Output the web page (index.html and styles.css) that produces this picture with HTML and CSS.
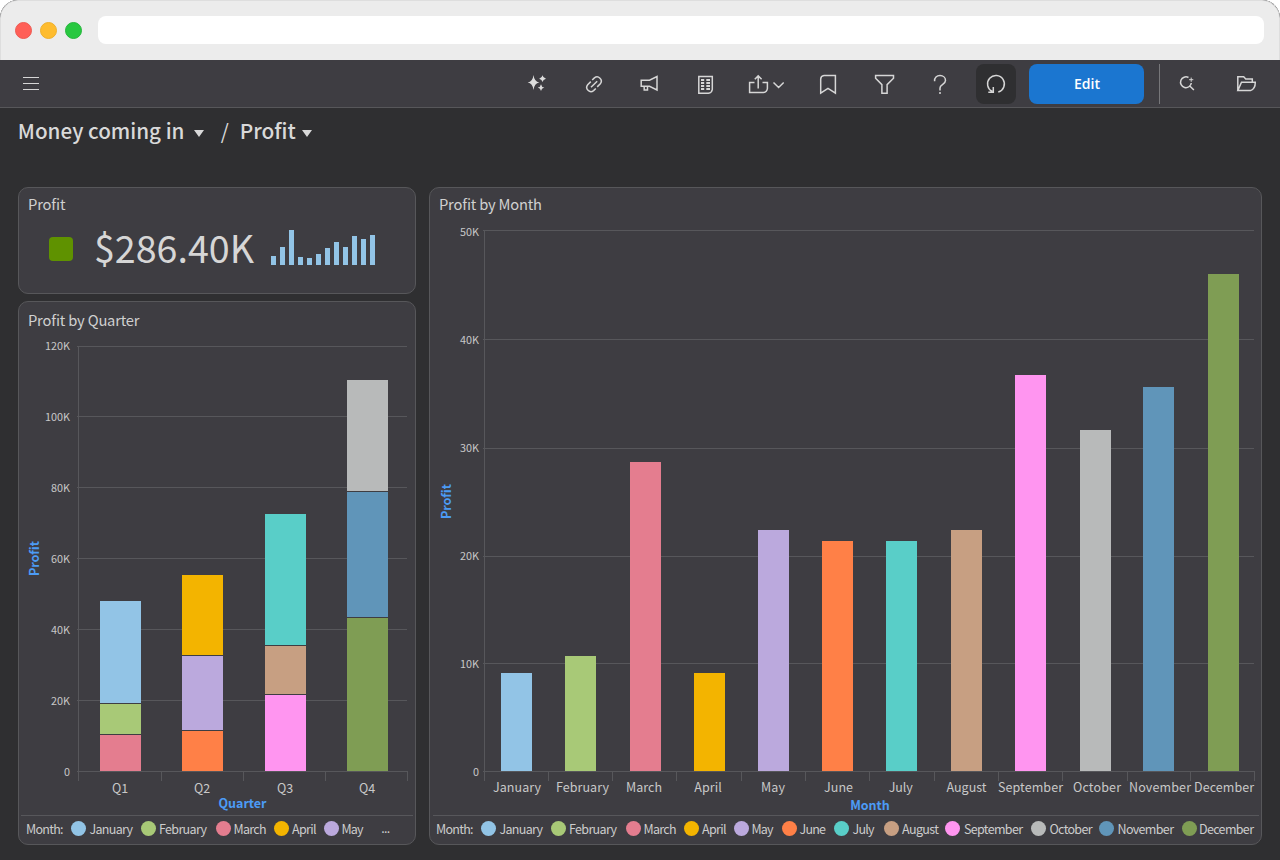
FILE: index.html
```html
<!DOCTYPE html>
<html lang="en">
<head>
<meta charset="utf-8">
<title>Profit dashboard</title>
<link rel="stylesheet" href="styles.css">
</head>
<body>
<div class="window">
  <header class="chrome">
    <span class="dot dot-red"></span>
    <span class="dot dot-yellow"></span>
    <span class="dot dot-green"></span>
    <div class="address"></div>
  </header>

  <nav class="toolbar">
    <svg class="icon" viewBox="11 64 40 40"><path class="thin" d="M23 77.5H39M23 83.5H39M23 89.5H39"/></svg>
    <div class="tools">
      <svg class="icon" viewBox="517 64 40 40"><g class="solid"><path d="M533.500 75Q534.300 81.700 539.300 82.500Q534.300 83.300 533.500 90Q532.700 83.300 527.700 82.500Q532.700 81.700 533.500 75Z"/><path d="M542.500 75.300Q543 78 546 78.700Q543 79.400 542.500 82Q542 79.400 539.200 78.700Q542 78 542.500 75.300Z"/><path d="M541 84.200Q541.500 87 544.300 87.600Q541.500 88.200 541 91Q540.500 88.200 537.800 87.600Q540.500 87 541 84.200Z"/></g></svg>
      <svg class="icon" viewBox="573 64 40 40"><path d="M592.200 80L594.400 77.900A4.200 4.200 0 0 1 600.300 83.800L597.200 86.900M595.800 88.500L593.600 90.600A4.200 4.200 0 0 1 587.700 84.700L590.800 81.600M591 87.200L597.200 81.200"/></svg>
      <svg class="icon" viewBox="629 64 40 40"><path d="M641.200 80.200H649.500L657 76.500V90L649.500 86.300H641.200ZM644.200 86.300V90H647.500V86.300"/></svg>
      <svg class="icon" viewBox="685 64 40 40"><path d="M698.800 76.600H712.300V89.500Q711.800 92.800 708.500 93.200H698.800Z"/><path class="heavy" d="M701 80H704.200M706.300 80H710M701 83H704.200M706.300 83H710M701 86H704.200M706.300 86H710M701 89H704.200M706.300 89H710"/></svg>
      <svg class="icon icon-wide" viewBox="741 64 51 40"><path d="M754.500 82.500H749.600V92.500H763.500Q767 92 767.400 88.500V82.500H762.500M758.200 88.500V76M754.800 79.300L758.200 75.900L761.600 79.300M773.500 82.500L778.600 87.500L783.700 82.500"/></svg>
      <svg class="icon" viewBox="808 64 40 40"><path d="M820.700 93.200V79Q820.900 75.900 824 75.600H835.400V93.200L828 88.400Z"/></svg>
      <svg class="icon" viewBox="864 64 40 40"><path d="M875.600 75.600H893.500V78.300L887.100 84.600V93.300H881.900V84.600L875.600 78.300Z"/></svg>
      <svg class="icon" viewBox="920 64 40 40"><path d="M934.600 81.200C934.300 77.500 936.800 75.600 940 75.600S945.500 77.600 945.500 80.500C945.500 84.300 940 84.300 940 88V90.500M940 92V94"/></svg>
      <div class="refresh"><svg class="icon" viewBox="976 64 40 40"><path d="M998.300 92A8.400 8.400 0 1 0 992.300 91.500M993.300 87V92.200H988.300"/></svg></div>
    </div>
    <button class="edit">Edit</button>
    <div class="divider"></div>
    <svg class="icon search" viewBox="1167 64 40 40"><path d="M1188.500 77.500A5.400 5.400 0 1 0 1191.300 83M1189.500 85.700L1193.900 90"/><path class="thin" d="M1191.200 77.600V81.800M1189.100 79.700H1193.300"/></svg>
    <svg class="icon folder" viewBox="1226 64 40 40"><path d="M1237.800 90.600V76.800H1243.700L1245.700 78.900H1252.300V82.300M1237.800 90.600L1241.500 82.300H1255.300Q1255.300 89.200 1250.500 90.600Z"/></svg>
  </nav>

  <div class="crumbs">
    <svg class="crumb-art" viewBox="0 108 430 79">
      <g class="crumb">
        <text x="17.800" y="139" textLength="166.700" lengthAdjust="spacingAndGlyphs">Money coming in</text>
        <text class="slash" x="220.800" y="139">/</text>
        <text x="239.700" y="139" textLength="56" lengthAdjust="spacingAndGlyphs">Profit</text>
      </g>
      <path class="caret" d="M194 130H204L199 137ZM302 130H312L307 137Z"/>
    </svg>
  </div>

  <main class="board">
    <div class="column">
      <section class="card card-kpi">
        <svg class="art" viewBox="19 188 396 105">
          <text class="title" x="28" y="210" textLength="37.500">Profit</text>
          <rect class="status" x="49" y="237" width="24" height="24" rx="4"/>
          <text class="figure" x="94" y="263" textLength="160" lengthAdjust="spacingAndGlyphs">$286.40K</text>
          <path class="jan" d="M271 265V256h5V265ZM280 265V247h5V265ZM289 265V230h5V265ZM298 265V257h5V265ZM307 265V258h5V265ZM316 265V254h5V265ZM325 265V248h5V265ZM334 265V242h5V265ZM343 265V247h5V265ZM352 265V236h5V265ZM361 265V239h5V265ZM370 265V235h5V265Z"/>
        </svg>
      </section>
      <section class="card card-quarter">
        <svg class="art" viewBox="19 302 396 542">
          <text class="title" x="28" y="326" textLength="111.500">Profit by Quarter</text>
          <path class="grid" d="M77 346.500H407M77 416.500H407M77 487.500H407M77 558.500H407M77 629.500H407M77 700.500H407M77 771.500H407M78.500 346V781M161.500 771V781M243.500 771V781M325.500 771V781M407.500 771V781"/>
          <g class="ticks">
            <text x="70" y="350">120K</text><text x="70" y="421">100K</text><text x="70" y="492">80K</text><text x="70" y="563">60K</text><text x="70" y="634">40K</text><text x="70" y="705">20K</text><text x="70" y="776">0</text>
          </g>
          <rect class="jan" x="100" y="601" width="41" height="102"/><rect class="feb" x="100" y="704" width="41" height="30"/><rect class="mar" x="100" y="735" width="41" height="36"/>
          <rect class="apr" x="182" y="575" width="41" height="80"/><rect class="may" x="182" y="656" width="41" height="74"/><rect class="jun" x="182" y="731" width="41" height="40"/>
          <rect class="jul" x="265" y="514" width="41" height="131"/><rect class="aug" x="265" y="646" width="41" height="48"/><rect class="sep" x="265" y="695" width="41" height="76"/>
          <rect class="oct" x="347" y="380" width="41" height="111"/><rect class="nov" x="347" y="492" width="41" height="125"/><rect class="dec" x="347" y="618" width="41" height="153"/>
          <g class="labels">
            <text x="120" y="793">Q1</text><text x="202" y="793">Q2</text><text x="285" y="793">Q3</text><text x="367" y="793">Q4</text>
          </g>
          <text class="axis" x="242.500" y="808" textLength="48">Quarter</text>
          <text class="axis" transform="translate(39 558.500) rotate(-90)" textLength="35">Profit</text>
          <path class="grid" d="M21 815.500H413"/>
          <circle class="jan" cx="78.500" cy="828.500" r="7.500"/><circle class="feb" cx="148.500" cy="828.500" r="7.500"/><circle class="mar" cx="223.500" cy="828.500" r="7.500"/><circle class="apr" cx="281.500" cy="828.500" r="7.500"/><circle class="may" cx="331.500" cy="828.500" r="7.500"/>
          <g class="legend">
            <text x="26" y="834" textLength="37.500">Month:</text><text x="89.500" y="834" textLength="43.500">January</text><text x="159" y="834" textLength="48">February</text><text x="233.500" y="834" textLength="33">March</text><text x="292" y="834" textLength="24.500">April</text><text x="341.500" y="834" textLength="22">May</text><text x="381.300" y="832.500" textLength="9">...</text>
          </g>
        </svg>
      </section>
    </div>

    <section class="card card-month">
      <svg class="art" viewBox="430 188 831 656">
        <text class="title" x="439" y="210" textLength="103">Profit by Month</text>
        <path class="grid" d="M483 230.500H1254M483 339.500H1254M483 448.500H1254M483 556.500H1254M483 663.500H1254M483 771.500H1254M484.500 230V781M548.500 771V781M612.500 771V781M676.500 771V781M741.500 771V781M805.500 771V781M869.500 771V781M934.500 771V781M998.500 771V781M1062.500 771V781M1127.500 771V781M1190.500 771V781M1254.500 771V781"/>
        <g class="ticks">
          <text x="479" y="236">50K</text><text x="479" y="344">40K</text><text x="479" y="452">30K</text><text x="479" y="560">20K</text><text x="479" y="668">10K</text><text x="479" y="776">0</text>
        </g>
        <rect class="jan" x="501" y="673" width="31" height="98"/>
        <rect class="feb" x="565" y="656" width="31" height="115"/>
        <rect class="mar" x="630" y="462" width="31" height="309"/>
        <rect class="apr" x="694" y="673" width="31" height="98"/>
        <rect class="may" x="758" y="530" width="31" height="241"/>
        <rect class="jun" x="822" y="541" width="31" height="230"/>
        <rect class="jul" x="886" y="541" width="31" height="230"/>
        <rect class="aug" x="951" y="530" width="31" height="241"/>
        <rect class="sep" x="1015" y="375" width="31" height="396"/>
        <rect class="oct" x="1080" y="430" width="31" height="341"/>
        <rect class="nov" x="1143" y="387" width="31" height="384"/>
        <rect class="dec" x="1208" y="274" width="31" height="497"/>
        <g class="labels">
          <text x="517" y="792" textLength="48">January</text><text x="582.500" y="792" textLength="53">February</text><text x="644" y="792" textLength="36">March</text><text x="708" y="792" textLength="27.500">April</text><text x="773" y="792" textLength="24">May</text><text x="838.500" y="792" textLength="29">June</text><text x="900.700" y="792" textLength="24">July</text><text x="966.500" y="792" textLength="40">August</text><text x="1030.500" y="792" textLength="65">September</text><text x="1097" y="792" textLength="48">October</text><text x="1160" y="792" textLength="62">November</text><text x="1224" y="792" textLength="60">December</text>
        </g>
        <text class="axis" x="870" y="810" textLength="39.500">Month</text>
        <text class="axis" transform="translate(451 501.500) rotate(-90)" textLength="35">Profit</text>
        <path class="grid" d="M433 815.500H1259"/>
        <circle class="jan" cx="488.500" cy="828.500" r="7.500"/><circle class="feb" cx="558.500" cy="828.500" r="7.500"/><circle class="mar" cx="633.500" cy="828.500" r="7.500"/><circle class="apr" cx="691.500" cy="828.500" r="7.500"/><circle class="may" cx="741.500" cy="828.500" r="7.500"/><circle class="jun" cx="789.500" cy="828.500" r="7.500"/><circle class="jul" cx="841.500" cy="828.500" r="7.500"/><circle class="aug" cx="891.500" cy="828.500" r="7.500"/><circle class="sep" cx="952.500" cy="828.500" r="7.500"/><circle class="oct" cx="1038.500" cy="828.500" r="7.500"/><circle class="nov" cx="1106.500" cy="828.500" r="7.500"/><circle class="dec" cx="1189.500" cy="828.500" r="7.500"/>
        <g class="legend">
          <text x="436" y="834" textLength="37.500">Month:</text><text x="499.500" y="834" textLength="43.500">January</text><text x="569" y="834" textLength="48">February</text><text x="643.500" y="834" textLength="33">March</text><text x="702" y="834" textLength="24.500">April</text><text x="751.500" y="834" textLength="22">May</text><text x="799.500" y="834" textLength="26.500">June</text><text x="852.500" y="834" textLength="22">July</text><text x="902" y="834" textLength="37">August</text><text x="964" y="834" textLength="59">September</text><text x="1049.500" y="834" textLength="43">October</text><text x="1117.500" y="834" textLength="56.500">November</text><text x="1199" y="834" textLength="55">December</text>
        </g>
      </svg>
    </section>
  </main>
</div>
</body>
</html>
```

FILE: styles.css
```css
* { box-sizing: border-box; }
body {
  margin: 0;
  background: #fff;
  font-family: "Noto Sans CJK SC", "Noto Sans", sans-serif;
  overflow: hidden;
}
.window {
  width: 1280px;
  height: 860px;
  display: flex;
  flex-direction: column;
  background: #2f2f31;
  border-radius: 18px 18px 0 0;
  overflow: hidden;
}
.chrome {
  height: 60px;
  flex: none;
  display: flex;
  align-items: center;
  gap: 8px;
  padding: 0 15px 1px 14px;
  background: #ececec;
  border: 1px solid #dedede;
  border-bottom: 0;
  border-radius: 18px 18px 0 0;
}
.dot { width: 17px; height: 17px; border-radius: 50%; }
.dot-red { background: #ff5f57; border: 1px solid #ee5a52; }
.dot-yellow { background: #febc2e; border: 1px solid #eeb02c; }
.dot-green { background: #28c840; border: 1px solid #26b73c; }
.address {
  flex: 1;
  height: 28px;
  margin-left: 8px;
  background: #fff;
  border-radius: 8px;
}
.toolbar {
  height: 48px;
  flex: none;
  display: flex;
  align-items: flex-start;
  padding: 4px 14px 0 11px;
  background: #3e3d42;
  border-bottom: 1px solid #57575a;
}
.icon {
  width: 40px;
  height: 40px;
  flex: none;
  display: block;
  fill: none;
  stroke: #d6d6d6;
  stroke-width: 1.5;
}
.icon-wide { width: 51px; }
.icon .thin { stroke-width: 1; }
.icon .heavy { stroke-width: 1.8; }
.icon .solid { fill: #dcdcdc; stroke: none; }
.tools { display: flex; gap: 16px; margin-left: 466px; }
.refresh { background: #2f2f31; border-radius: 8px; }
.edit {
  width: 115px;
  height: 40px;
  margin-left: 13px;
  padding: 0 0 0 1px;
  border: 0;
  border-radius: 8px;
  background: #1b76d0;
  color: #fff;
  font: 600 14px/40px "Open Sans", sans-serif;
}
.divider { width: 1px; height: 40px; margin-left: 15px; background: #77777a; }
.search { margin-left: 7px; }
.folder { margin-left: 19px; }
.crumbs { height: 79px; flex: none; }
.crumb-art { display: block; width: 430px; height: 79px; }
.crumb { font-size: 20.5px; font-weight: 500; fill: #d9d9d9; }
.slash { font-weight: 400; }
.caret { fill: #d9d9d9; }
.board {
  display: grid;
  grid-template-columns: 398px 833px;
  column-gap: 13px;
  height: 658px;
  padding-left: 18px;
}
.column { display: grid; grid-template-rows: 107px 544px; row-gap: 7px; }
.card {
  background: #3e3d42;
  border: 1px solid #57575a;
  border-radius: 10px;
  overflow: hidden;
}
.art { display: block; width: 100%; height: 100%; }
.title { font-size: 14.7px; fill: #d0d0d0; }
.status { fill: #5f9200; }
.figure { font-size: 38px; font-weight: 400; fill: #d6d6d6; }
.grid { fill: none; stroke: #57575b; stroke-width: 1; }
.ticks { font-size: 10.8px; fill: #c8c8c8; text-anchor: end; }
.labels { font-size: 12.5px; fill: #c8c8c8; text-anchor: middle; }
.axis { font-size: 12.5px; font-weight: 700; fill: #4c9bf5; text-anchor: middle; }
.legend { font-size: 12.5px; fill: #cccccc; }
.jan { fill: #92c4e6; }
.feb { fill: #a8c977; }
.mar { fill: #e47d8f; }
.apr { fill: #f3b400; }
.may { fill: #bba9dd; }
.jun { fill: #ff8047; }
.jul { fill: #59cec8; }
.aug { fill: #c79f82; }
.sep { fill: #ff95f0; }
.oct { fill: #b8baba; }
.nov { fill: #6095b9; }
.dec { fill: #7f9d54; }
```
